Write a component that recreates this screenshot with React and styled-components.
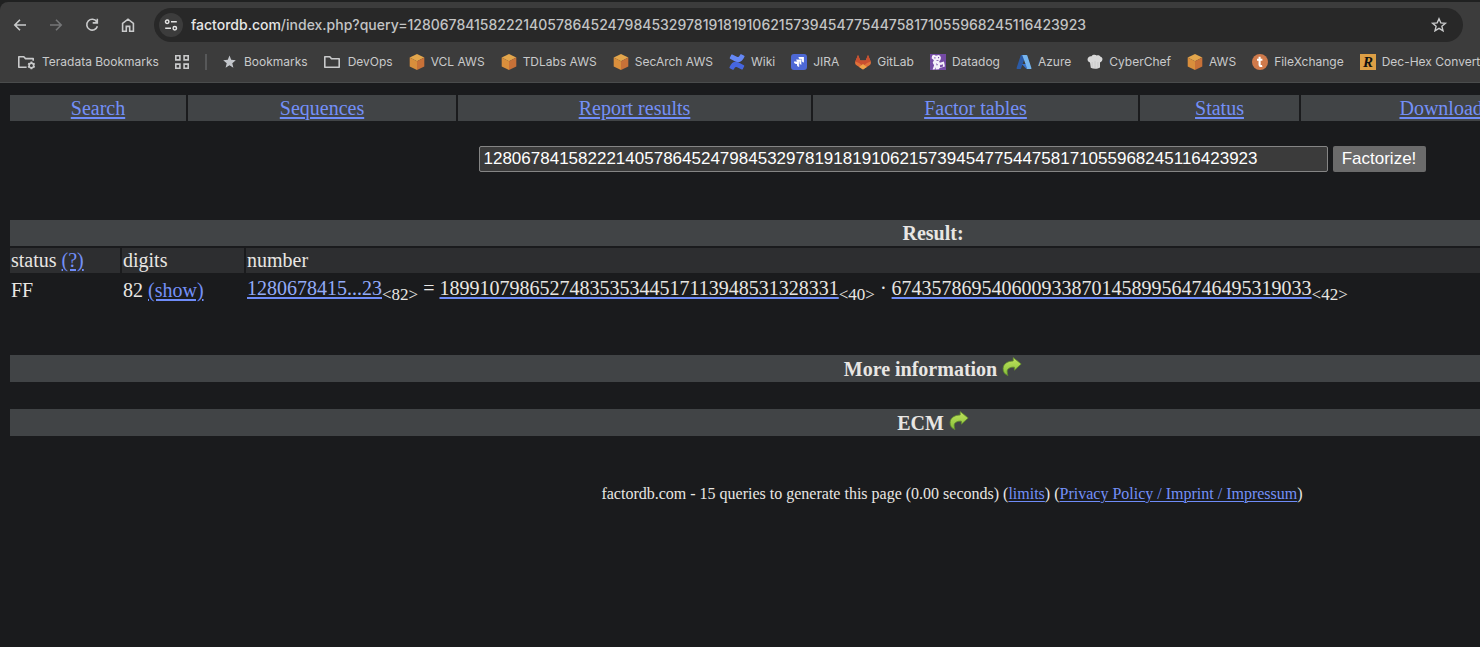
import React from "react";
import styled, { createGlobalStyle, css } from "styled-components";

const NUMBER =
  "1280678415822214057864524798453297819181910621573945477544758171055968245116423923";

const GlobalStyle = createGlobalStyle`
  * { box-sizing: border-box; }
  html, body { margin: 0; background: #1a1b1d; }
  body { overflow: hidden; color: #e8e6e3; font: 20px/24px "Liberation Serif", "Times New Roman", serif; }
`;

/* ---------- browser chrome ---------- */

const Chrome = styled.header`
  padding-top: 2px;
  background: #202121;
  font-family: Inter, sans-serif;
`;

const ChromePanel = styled.div`
  background: #3c3c3c;
  border-bottom: 1px solid #4a4c4c;
  border-top-left-radius: 8px;
  overflow: hidden;
`;

const Toolbar = styled.div`
  display: flex;
  align-items: center;
  padding: 6px 17px 0 11px;
`;

const NavButtons = styled.div`
  display: flex;
  gap: 18px;
  margin-right: 17px;
`;

const iconButton = css`
  display: flex;
  align-items: center;
  justify-content: center;
  flex: none;
  padding: 0;
  border: 0;
  background: none;
  color: #c9cacb;
`;

const IconButton = styled.button`
  ${iconButton}
  width: 18px;
  height: 24px;
  &:disabled { color: #757677; }
`;

const AddressBar = styled.div`
  display: flex;
  align-items: center;
  flex: 1;
  min-width: 0;
  height: 34px;
  padding: 0 15px 0 5px;
  border-radius: 17px;
  background: #282828;
`;

const SiteInfo = styled.button`
  ${iconButton}
  width: 24px;
  height: 24px;
  margin-right: 8px;
  border-radius: 12px;
  background: #3c3c3c;
  color: #e3e3e3;
`;

const Address = styled.div`
  flex: 1;
  min-width: 0;
  overflow: hidden;
  white-space: nowrap;
  font-size: 14px;
  font-weight: 500;
  line-height: 20px;
  color: #c3c4c5;
`;

const Host = styled.span`
  color: #e6e6e6;
`;

const BookmarkBar = styled.nav`
  display: flex;
  align-items: center;
  gap: 16px;
  height: 40px;
  padding-left: 18px;
  white-space: nowrap;
`;

const Bookmark = styled.a`
  display: flex;
  align-items: center;
  flex: none;
  gap: ${(p) => (p.$wide ? 8 : 6)}px;
  color: #c9cacb;
  font-size: 12px;
  line-height: 16px;
  text-decoration: none;
  svg { flex: none; }
`;

const Divider = styled.span`
  flex: none;
  width: 2px;
  height: 16px;
  background: #575859;
`;

/* ---------- web page ---------- */

const Page = styled.main`
  width: calc(100% + 424px);
  padding: 12px 10px;
`;

const SiteNav = styled.nav`
  display: grid;
  grid-template-columns: 176fr 268fr 353fr 325fr 159fr 288fr 303fr;
  gap: 2px;
`;

const NavCell = styled.div`
  padding: 1px;
  background: #414446;
  text-align: center;
`;

const Link = styled.a`
  color: ${(p) => (p.$plain ? "#e8e6e3" : p.$soft ? "#93abfa" : "#7490f8")};
  text-decoration: underline;
  text-decoration-color: #6f8cf8;
  text-decoration-thickness: ${(p) => (p.$thin ? 1 : 2)}px;
  text-underline-offset: 2px;
`;

const SearchForm = styled.form`
  display: flex;
  justify-content: center;
  gap: 5px;
  margin: 25px 0 46px;
`;

const field = css`
  height: 26px;
  border-radius: 2px;
  color: #ffffff;
  font: 17px "Liberation Sans", Arial, sans-serif;
`;

const QueryInput = styled.input`
  ${field}
  width: 849px;
  padding: 0 4px;
  border: 1px solid #858585;
  background: #3b3b3b;
`;

const SubmitButton = styled.button`
  ${field}
  width: 93px;
  padding: 0;
  border: 0;
  background: #6b6b6b;
`;

const Results = styled.table`
  width: calc(100% - 34px);
  margin: 0 -2px 48px;
  border-spacing: 2px;
  table-layout: fixed;
  th, td {
    padding: 1px;
    text-align: left;
    font-weight: normal;
    white-space: nowrap;
  }
  td { height: 30px; }
`;

const TitleCell = styled.th`
  && {
    background: #414446;
    font-weight: bold;
    text-align: center;
  }
`;

const HeadCell = styled.th`
  height: 25px;
  line-height: 23px;
  background: #2d2e30;
`;

const NumberCell = styled.td`
  vertical-align: top;
`;

const Digits = styled.sub`
  font-size: 17px;
  line-height: 0;
`;

const Section = styled.h2`
  display: flex;
  justify-content: center;
  gap: 5px;
  width: calc(100% - 38px);
  margin: 0 0 27px;
  padding: 2px 0 1px;
  background: #414446;
  font-size: 20px;
  line-height: 24px;
`;

const ExpandButton = styled.button`
  ${iconButton}
  width: 20px;
  height: 20px;
`;

const Footer = styled.footer`
  margin-top: 48px;
  text-align: center;
  font-size: 16px;
  line-height: 20px;
`;

/* ---------- drawings ---------- */

const stroke = { fill: "none", stroke: "currentColor", strokeWidth: 1.6 };

const BackIcon = () => (
  <svg width="18" height="18" viewBox="0 0 18 18" {...stroke}><path d="M15 9H4M9 3.8 3.8 9 9 14.2" /></svg>
);
const ForwardIcon = () => (
  <svg width="18" height="18" viewBox="0 0 18 18" {...stroke}><path d="M3 9h11M9 3.8 14.2 9 9 14.2" /></svg>
);
const ReloadIcon = () => (
  <svg width="18" height="18" viewBox="0 0 18 18" {...stroke}><path d="M13.7 5.7A5.4 5.4 0 1 0 14.4 10.2M14.3 2.8v4.1h-4.6" /></svg>
);
const HomeIcon = () => (
  <svg width="18" height="18" viewBox="0 0 18 18" {...stroke}><path d="M3.6 15.2V7.3L9 3.2l5.4 4.1v7.9h-3.7v-4.8H7.3v4.8Z" /></svg>
);
const TuneIcon = () => (
  <svg width="16" height="16" viewBox="0 0 16 16" fill="none" stroke="currentColor" strokeWidth="1.5">
    <circle cx="4.2" cy="4.8" r="1.7" /><path d="M8 4.8h5.8M2.2 11.2H8" /><circle cx="11.8" cy="11.2" r="1.7" />
  </svg>
);
const StarOutline = () => (
  <svg width="18" height="18" viewBox="0 0 18 18" {...stroke} strokeWidth="1.4"><path d="m9 2.7 1.8 4.2 4.6.4-3.5 3 1.1 4.5L9 12.4 5 14.8l1.1-4.5-3.5-3 4.6-.4Z" /></svg>
);
const StarSolid = () => (
  <svg width="13" height="14" viewBox="0 0 13 14" fill="#c3c6cb"><path d="m6.5.5 1.7 4.3 4.6.4-3.5 3 1.1 4.5-3.9-2.4-3.9 2.4 1.1-4.5-3.5-3 4.6-.4Z" /></svg>
);
const FolderIcon = () => (
  <svg width="16" height="14" viewBox="0 0 16 14" {...stroke} strokeLinejoin="round"><path d="M.8 1.8h5l1.7 2h7.700v8.400H.8Z" /></svg>
);
const ManagedFolderIcon = () => (
  <svg width="18" height="15" viewBox="0 0 18 15" {...stroke}>
    <path d="M8.600 12.300H.8V1.800h5l1.700 1.800h7.700v2.200" strokeLinejoin="round" />
    <circle cx="13.400" cy="10.400" r="2.300" />
    <path d="M13.400 6.600v1.600M13.400 12.600v1.600M10.100 8.500l1.400.8M15.300 11.500l1.400.8M16.700 8.500l-1.400.8M11.500 11.500l-1.400.8" strokeWidth="1.800" />
  </svg>
);
const AppsIcon = () => (
  <svg width="14" height="14" viewBox="0 0 14 14" {...stroke}>
    <path d="M.8.8h4.100v4.100H.8ZM9.100.8h4.100v4.100H9.100ZM.8 9.100h4.100v4.100H.8ZM9.100 9.100h4.100v4.100H9.100Z" />
  </svg>
);
const CubeIcon = () => (
  <svg width="16" height="16" viewBox="0 0 16 16">
    <path d="m8 0 7.300 3.600L8 7.200.7 3.600Z" fill="#e3a64c" /><path d="M.7 3.600 8 7.200V16L.7 12.400Z" fill="#d98e3c" /><path d="M15.300 3.600 8 7.200V16l7.300-3.600Z" fill="#c87138" />
  </svg>
);
const ConfluenceIcon = () => (
  <svg width="16" height="16" viewBox="0 0 16 16">
    <path d="M.8 3.800 2.300.8c.2-.4.6-.5 1-.3l4.600 2.300c1.300.6 1.900.3 2.500-.7l.9-1.500c.2-.4.6-.5 1-.3l2.900 1.500c.4.2.5.6.3 1-2.300 4.800-5 6.500-9.200 4.600L1.100 4.800c-.4-.2-.5-.6-.3-1Z" fill="#6587f4" />
    <path d="m15.200 12.200-1.500 3c-.2.4-.6.5-1 .3l-4.600-2.300c-1.300-.6-1.900-.3-2.500.7l-.9 1.500c-.2.4-.6.5-1 .3L.8 14.200c-.4-.2-.5-.6-.3-1 2.300-4.800 5-6.500 9.200-4.600l5.200 2.600c.4.2.5.6.3 1Z" fill="#4666df" />
  </svg>
);
const JiraIcon = () => (
  <svg width="16" height="16" viewBox="0 0 16 16">
    <rect width="16" height="16" rx="3" fill="#4d68d5" />
    <path d="M7.500 3h5.400v5.400c-1.500 0-2.300-.9-2.300-2.200v-.8h-.8C8.400 5.400 7.500 4.500 7.500 3ZM5.200 5.300h5.400v5.400c-1.500 0-2.300-.9-2.300-2.200v-.8h-.8c-1.400 0-2.300-.9-2.300-2.400ZM2.900 7.600h5.400V13C6.800 13 6 12.100 6 10.800V10h-.8c-1.400 0-2.300-.9-2.300-2.400Z" fill="#fff" />
    <path d="M10.600 5.300v5.400M8.300 7.600V13M5.200 5.300h5.400" stroke="#4d68d5" strokeWidth=".5" />
  </svg>
);
const GitlabIcon = () => (
  <svg width="16" height="16" viewBox="0 0 16 16">
    <path d="M3 1 .3 7.500C-.2 9 .3 10.300 1.500 11.300L8 15.600l6.500-4.300c1.200-1 1.700-2.300 1.200-3.800L13 1l-2.300 5.400H5.300Z" fill="#e0703a" />
    <path d="M3 1 .3 7.500 4 9l4 3 4-3 3.700-1.500L13 1l-2.300 5.400H5.300Z" fill="#c94f30" />
    <path d="m4.200 12.900 3.800-3 3.800 3L8 15.600Z" fill="#efa347" />
  </svg>
);
const DatadogIcon = () => (
  <svg width="16" height="16" viewBox="0 0 16 16">
    <path d="M0 0h16v16H0Z" fill="#744aa4" />
    <path d="M2.200 1.600 4 .8l2 1 2.600-.8 1.500.8.900 2-.6 2.200-1.200 1.200.6 1.600 4.200-1.400.9 5-5.300 1.600-.7 1.200-3.300.2.300-2.200-1.300 2.300-2-.1 1.500-4.200L2.700 8.800l1.200-2.500L1.600 4.200Z" fill="#f4effa" />
    <path d="M4.300 3.300h1.200v1.200H4.300ZM8 3.100h1.100v1.200H8ZM6.500 6h2v.8h-2ZM6 9.300l1.900 1.200-1 1.300ZM9.900 11.600l1.100-1 .7.500 1-1 .4 2.300-3 .8Z" fill="#744aa4" />
  </svg>
);
const AzureIcon = () => (
  <svg width="16" height="16" viewBox="0 0 16 16">
    <path d="M5.500 1h4.300L5 14.500c-.2.400-.5.500-.9.500H1.300c-.6 0-.9-.5-.7-1.100L4.700 1.600c.1-.4.400-.6.800-.6Z" fill="#2b5aa5" />
    <path d="M5.700 10h6.600l1.500 5h-3.300Z" fill="#3973cc" /><path d="M6.200 1h4.300c.4 0 .7.200.8.600l4.100 12.300c.2.600-.1 1.100-.7 1.100h-4.200c.5-.2.700-.6.500-1.100Z" fill="#76b5ef" />
  </svg>
);
const ChefIcon = () => (
  <svg width="16" height="16" viewBox="0 0 16 16">
    <path d="M3 8.500C.8 8 .1 6 .8 4.300 1.500 2.500 3.300 1.800 4.600 2.300 5.500.7 8.300.4 9.700 1.600c1.500-.6 2.900-.1 3.500.9 1.700.2 2.600 1.800 2.200 3.300-.4 1.500-1.300 2.400-2.400 2.700v5.100c-2.600 1.600-6.600 1.600-9.200.2Z" fill="#d9d9d9" />
    <path d="M5.200 8v5.500M8 7v6.900M10.900 8v5.500" stroke="#c6c6c6" strokeWidth=".8" />
  </svg>
);
const FileXchangeIcon = () => (
  <svg width="16" height="16" viewBox="0 0 16 16">
    <circle cx="8" cy="8" r="8" fill="#cf7a4b" />
    <path d="M7.600 2.800v8c0 1.100.9 1.500 2.600 1.100M5 5.700h5.400" fill="none" stroke="#fff" strokeWidth="2.100" />
  </svg>
);
const RapidIcon = () => (
  <svg width="16" height="16" viewBox="0 0 16 16">
    <path d="M0 0h16v16H0Z" fill="#dd9f45" />
    <text x="8" y="13" textAnchor="middle" fontWeight="bold" fontSize="15" fontStyle="italic" fontFamily="Liberation Serif, serif" fill="#111">R</text>
  </svg>
);
const GreenArrow = () => (
  <svg width="20" height="20" viewBox="0 0 20 20">
    <defs>
      <linearGradient id="leaf" x1="0" y1="0" x2="0" y2="1">
        <stop offset="0" stopColor="#c0e35c" /><stop offset="1" stopColor="#86c03a" />
      </linearGradient>
    </defs>
    <path d="M11.200.6 19.200 7 12.400 13.200V10.200C8.200 9.800 5 11.600 5.200 14.600 5.200 16.200 5.500 17.400 6 18.600 2.600 17.200.9 14.600 1.100 11.400 1.400 6.800 5.600 4 11.200 4Z" fill="url(#leaf)" stroke="#5f8a2c" strokeWidth=".8" strokeLinejoin="round" />
  </svg>
);

/* ---------- content ---------- */

const BOOKMARKS = [
  [StarSolid, "Bookmarks", true],
  [FolderIcon, "DevOps", true],
  [CubeIcon, "VCL AWS"],
  [CubeIcon, "TDLabs AWS"],
  [CubeIcon, "SecArch AWS"],
  [ConfluenceIcon, "Wiki"],
  [JiraIcon, "JIRA"],
  [GitlabIcon, "GitLab"],
  [DatadogIcon, "Datadog"],
  [AzureIcon, "Azure"],
  [ChefIcon, "CyberChef"],
  [CubeIcon, "AWS"],
  [FileXchangeIcon, "FileXchange"],
  [RapidIcon, "Dec-Hex Converter"],
];

const SECTIONS = ["Search", "Sequences", "Report results", "Factor tables", "Status", "Downloads"];

export default function App() {
  return (
    <>
      <GlobalStyle />
      <Chrome>
        <ChromePanel>
          <Toolbar>
            <NavButtons>
              <IconButton aria-label="Back"><BackIcon /></IconButton>
              <IconButton aria-label="Forward" disabled><ForwardIcon /></IconButton>
              <IconButton aria-label="Reload"><ReloadIcon /></IconButton>
              <IconButton aria-label="Home"><HomeIcon /></IconButton>
            </NavButtons>
            <AddressBar>
              <SiteInfo aria-label="Site information"><TuneIcon /></SiteInfo>
              <Address><Host>factordb.com</Host>/index.php?query={NUMBER}</Address>
              <IconButton aria-label="Bookmark this page"><StarOutline /></IconButton>
            </AddressBar>
          </Toolbar>
          <BookmarkBar>
            <Bookmark href="#"><ManagedFolderIcon />Teradata Bookmarks</Bookmark>
            <Bookmark href="#" aria-label="Apps"><AppsIcon /></Bookmark>
            <Divider />
            {BOOKMARKS.map(([Icon, label, wide]) => (
              <Bookmark href="#" key={label} $wide={wide}><Icon />{label}</Bookmark>
            ))}
          </BookmarkBar>
        </ChromePanel>
      </Chrome>

      <Page>
        <SiteNav>
          {SECTIONS.map((label) => (
            <NavCell key={label}><Link href="#">{label}</Link></NavCell>
          ))}
        </SiteNav>

        <SearchForm onSubmit={(e) => e.preventDefault()}>
          <QueryInput aria-label="Number" defaultValue={NUMBER} />
          <SubmitButton>Factorize!</SubmitButton>
        </SearchForm>

        <Results>
          <colgroup>
            <col width="110" />
            <col width="122" />
            <col />
          </colgroup>
          <thead>
            <tr><TitleCell colSpan={3}>Result:</TitleCell></tr>
            <tr>
              <HeadCell>status <Link href="#">(?)</Link></HeadCell>
              <HeadCell>digits</HeadCell>
              <HeadCell>number</HeadCell>
            </tr>
          </thead>
          <tbody>
            <tr>
              <td>FF</td>
              <td>82 <Link href="#">(show)</Link></td>
              <NumberCell>
                <Link href="#" $soft>1280678415...23</Link><Digits>&lt;82&gt;</Digits>
                {" = "}
                <Link href="#" $plain>1899107986527483535344517113948531328331</Link><Digits>&lt;40&gt;</Digits>
                {" · "}
                <Link href="#" $plain>674357869540600933870145899564746495319033</Link><Digits>&lt;42&gt;</Digits>
              </NumberCell>
            </tr>
          </tbody>
        </Results>

        <Section>More information <ExpandButton aria-label="Show more information"><GreenArrow /></ExpandButton></Section>
        <Section>ECM <ExpandButton aria-label="Show ECM"><GreenArrow /></ExpandButton></Section>

        <Footer>
          factordb.com - 15 queries to generate this page (0.00 seconds) (<Link href="#" $thin>limits</Link>) (
          <Link href="#" $thin>Privacy Policy / Imprint / Impressum</Link>)
        </Footer>
      </Page>
    </>
  );
}
